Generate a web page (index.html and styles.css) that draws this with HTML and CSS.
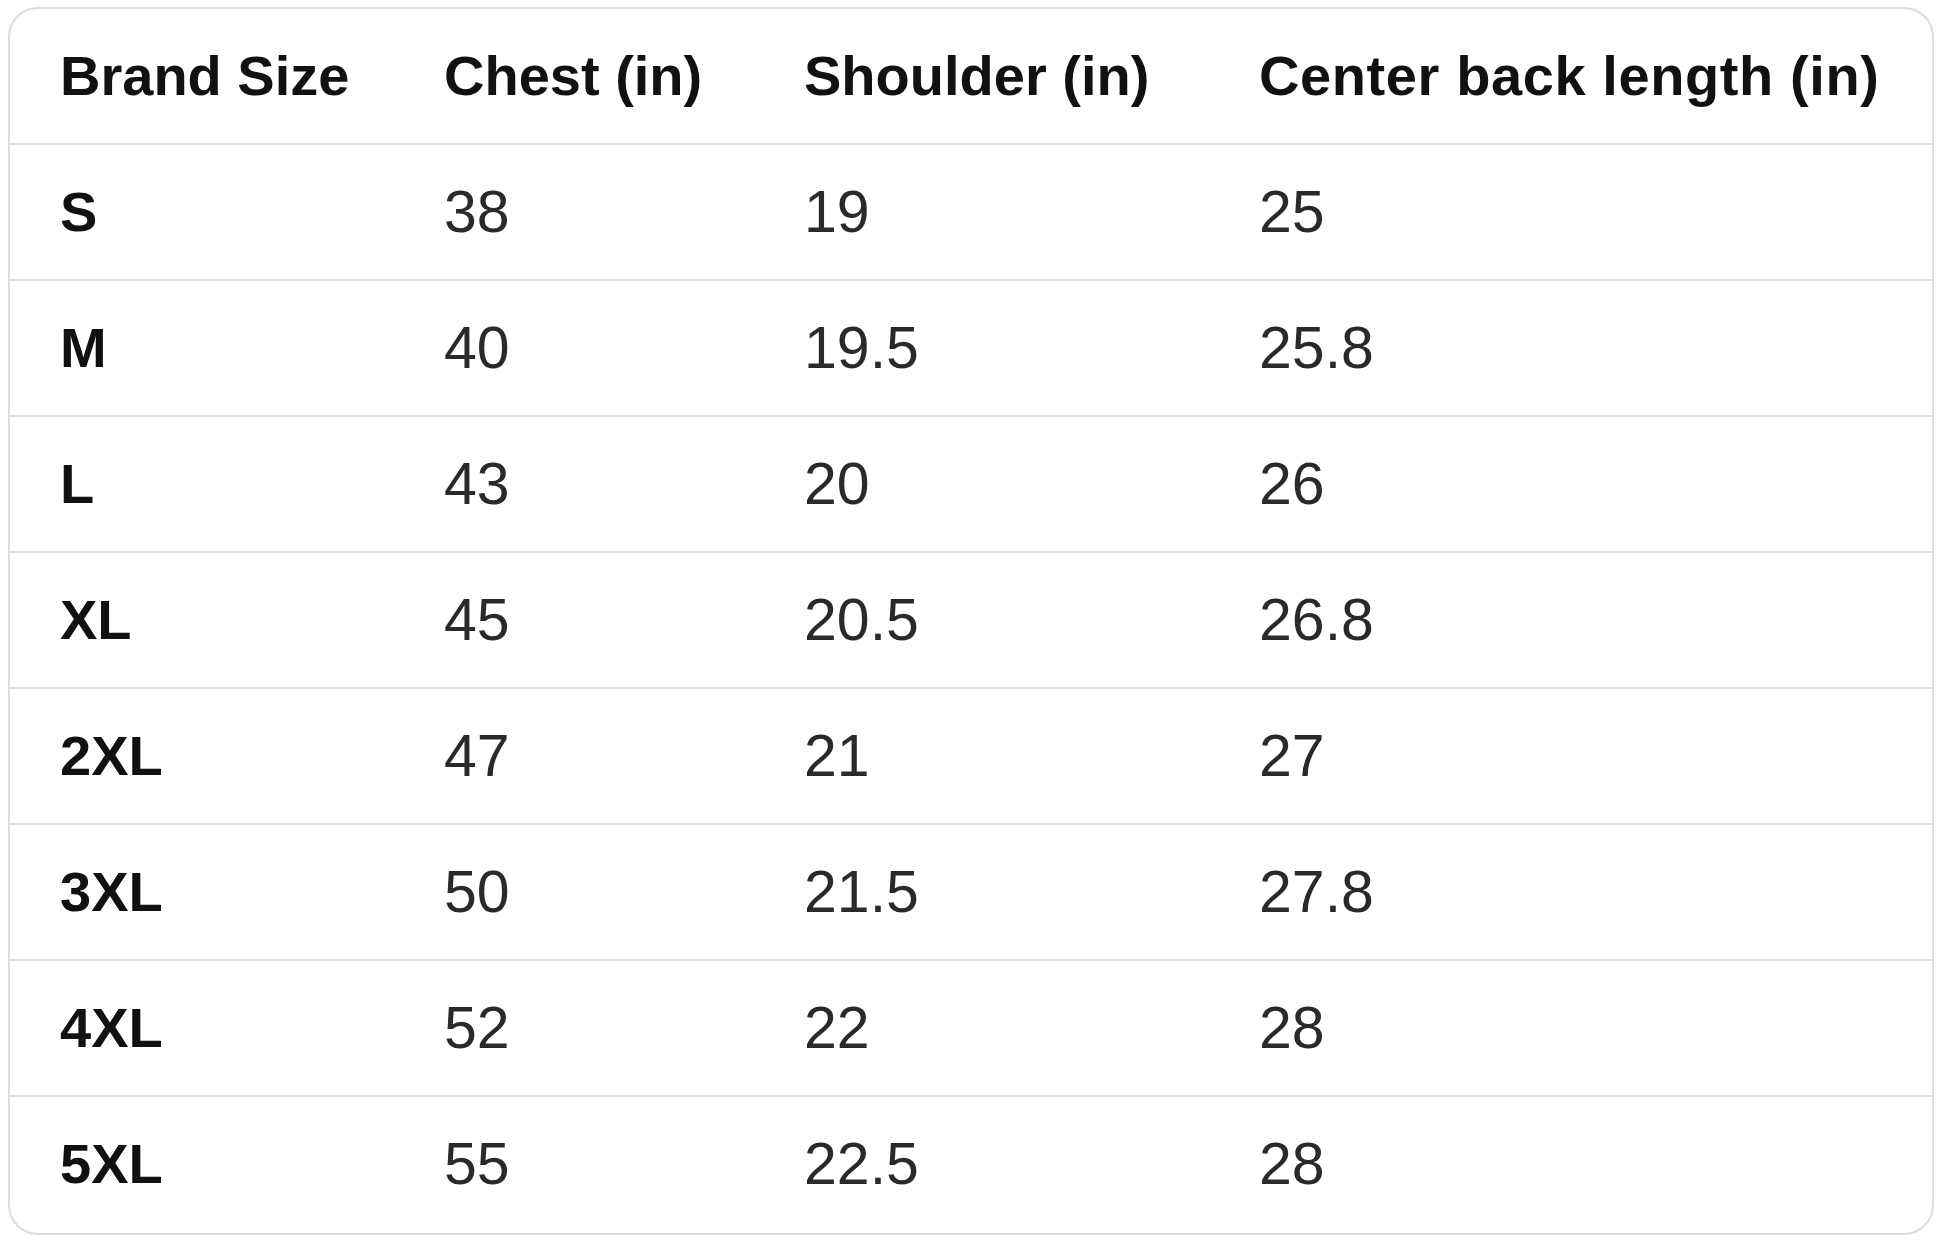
FILE: index.html
```html
<!DOCTYPE html>
<html lang="en">
<head>
<meta charset="utf-8">
<title>Size chart</title>
<link rel="stylesheet" href="styles.css">
</head>
<body>
<div class="chart">
  <table class="size-table">
    <colgroup>
      <col class="c1"><col class="c2"><col class="c3"><col class="c4">
    </colgroup>
    <thead>
      <tr><th>Brand Size</th><th>Chest (in)</th><th>Shoulder (in)</th><th class="wide">Center back length (in)</th></tr>
    </thead>
    <tbody>
      <tr><th>S</th><td>38</td><td>19</td><td>25</td></tr>
      <tr><th>M</th><td>40</td><td>19.5</td><td>25.8</td></tr>
      <tr><th>L</th><td>43</td><td>20</td><td>26</td></tr>
      <tr><th>XL</th><td>45</td><td>20.5</td><td>26.8</td></tr>
      <tr><th>2XL</th><td>47</td><td>21</td><td>27</td></tr>
      <tr><th>3XL</th><td>50</td><td>21.5</td><td>27.8</td></tr>
      <tr><th>4XL</th><td>52</td><td>22</td><td>28</td></tr>
      <tr><th>5XL</th><td>55</td><td>22.5</td><td>28</td></tr>
    </tbody>
  </table>
</div>
</body>
</html>
```
FILE: styles.css
```css
html, body {
  margin: 0;
  padding: 0;
  background: #ffffff;
}
body {
  font-family: "Liberation Sans", Arial, sans-serif;
  color: #0f1111;
}
.chart {
  margin: 7px 0 0 8px;
  width: 1926px;
  height: 1228px;
  border: 2px solid #dcdcdc;
  border-radius: 30px;
  overflow: hidden;
  box-sizing: border-box;
}
.size-table {
  width: 100%;
  border-collapse: collapse;
  table-layout: fixed;
}
.c1 { width: 384px; }
.c2 { width: 360px; }
.c3 { width: 455px; }
.c4 { width: auto; }
.size-table th,
.size-table td {
  height: 134px;
  padding: 0 0 0 50px;
  text-align: left;
  vertical-align: middle;
  line-height: 1;
  border-bottom: 2px solid #dedede;
  white-space: nowrap;
}
.size-table tbody tr:last-child th,
.size-table tbody tr:last-child td {
  border-bottom: none;
}
.size-table th {
  font-size: 56px;
  font-weight: 700;
  color: #111111;
}
.size-table th.wide {
  letter-spacing: 0.6px;
}
.size-table td {
  font-size: 59px;
  font-weight: 400;
  color: #2a2a2a;
}
```
